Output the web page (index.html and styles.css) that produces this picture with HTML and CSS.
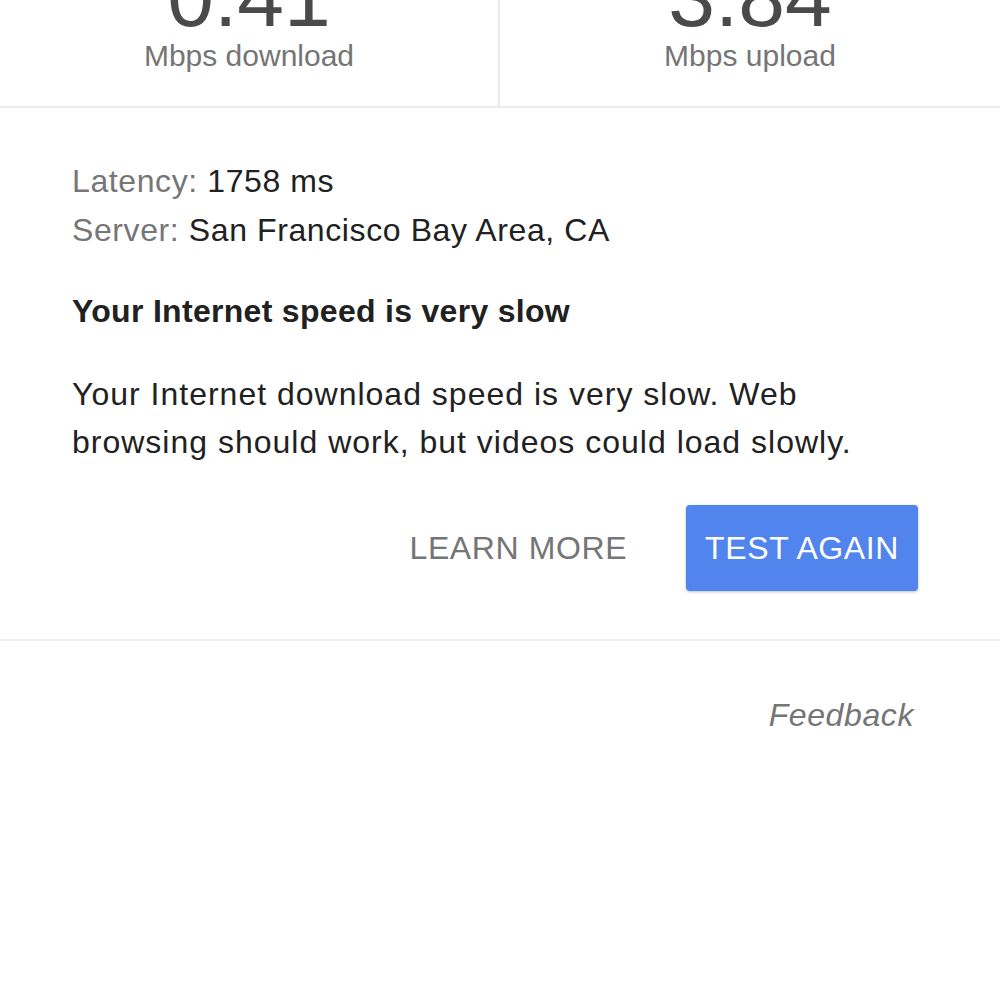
FILE: index.html
```html
<!DOCTYPE html>
<html lang="en">

<head>
  <meta charset="UTF-8">
  <meta name="viewport" content="width=device-width, initial-scale=1.0">
  <title>Speed test</title>
  <link rel="stylesheet" href="styles.css">
</head>

<body>

  <div class="speeds">
    <div class="speed">
      <div class="speed-value">0.41</div>
      <div class="speed-label">Mbps download</div>
    </div>
    <div class="speed">
      <div class="speed-value">3.84</div>
      <div class="speed-label">Mbps upload</div>
    </div>
  </div>

  <div class="result">
    <div class="info-row"><span class="info-label">Latency:</span> 1758 ms</div>
    <div class="info-row"><span class="info-label">Server:</span> San Francisco Bay Area, CA</div>

    <h3 class="verdict">Your Internet speed is very slow</h3>

    <p class="details">Your Internet download speed is very slow. Web browsing should work, but videos could load slowly.</p>

    <div class="actions">
      <button class="btn btn-flat">LEARN MORE</button>
      <button class="btn btn-primary">TEST AGAIN</button>
    </div>
  </div>

  <div class="footer">
    <a class="feedback" href="#">Feedback</a>
  </div>

</body>

</html>
```

FILE: styles.css
```css
body {
  margin: 0;
  font-family: "Liberation Sans", Arial, sans-serif;
  color: #212121;
  background: #fff;
}

.speeds {
  display: grid;
  grid-template-columns: 1fr 1fr;
  margin-top: -37px;
  border-bottom: 2px solid #ececec;
}

.speed {
  text-align: center;
  padding-bottom: 32px;
}

.speed:first-child {
  border-right: 2px solid #ececec;
}

.speed-value {
  font-size: 84px;
  line-height: 68px;
  color: #4a4a4a;
}

.speed-label {
  margin-top: 7px;
  font-size: 30px;
  line-height: 36px;
  color: #757575;
}

.result {
  padding: 49px 82px 48px 72px;
  border-bottom: 2px solid #ececec;
  font-size: 32px;
  letter-spacing: 0.6px;
}

.info-row {
  line-height: 49px;
}

.info-label {
  color: #767676;
}

.verdict {
  margin: 32px 0 0;
  font-size: 32px;
  line-height: 49px;
  font-weight: bold;
  letter-spacing: 0.3px;
}

.details {
  margin: 34px 0 0;
  line-height: 48px;
  letter-spacing: 1px;
}

.actions {
  display: flex;
  justify-content: flex-end;
  gap: 40px;
  margin-top: 39px;
}

.btn {
  height: 86px;
  padding: 0 19px;
  border: none;
  border-radius: 4px;
  font-family: inherit;
  font-size: 32px;
  letter-spacing: 0.6px;
  background: none;
}

.btn-flat {
  color: #757575;
}

.btn-primary {
  color: #fff;
  background: #5184ec;
  box-shadow: 0 1px 3px rgba(0, 0, 0, 0.25);
}

.footer {
  padding: 56px 86px 0 0;
  text-align: right;
}

.feedback {
  font-size: 32px;
  letter-spacing: 0.6px;
  font-style: italic;
  color: #757575;
  text-decoration: none;
}
```
